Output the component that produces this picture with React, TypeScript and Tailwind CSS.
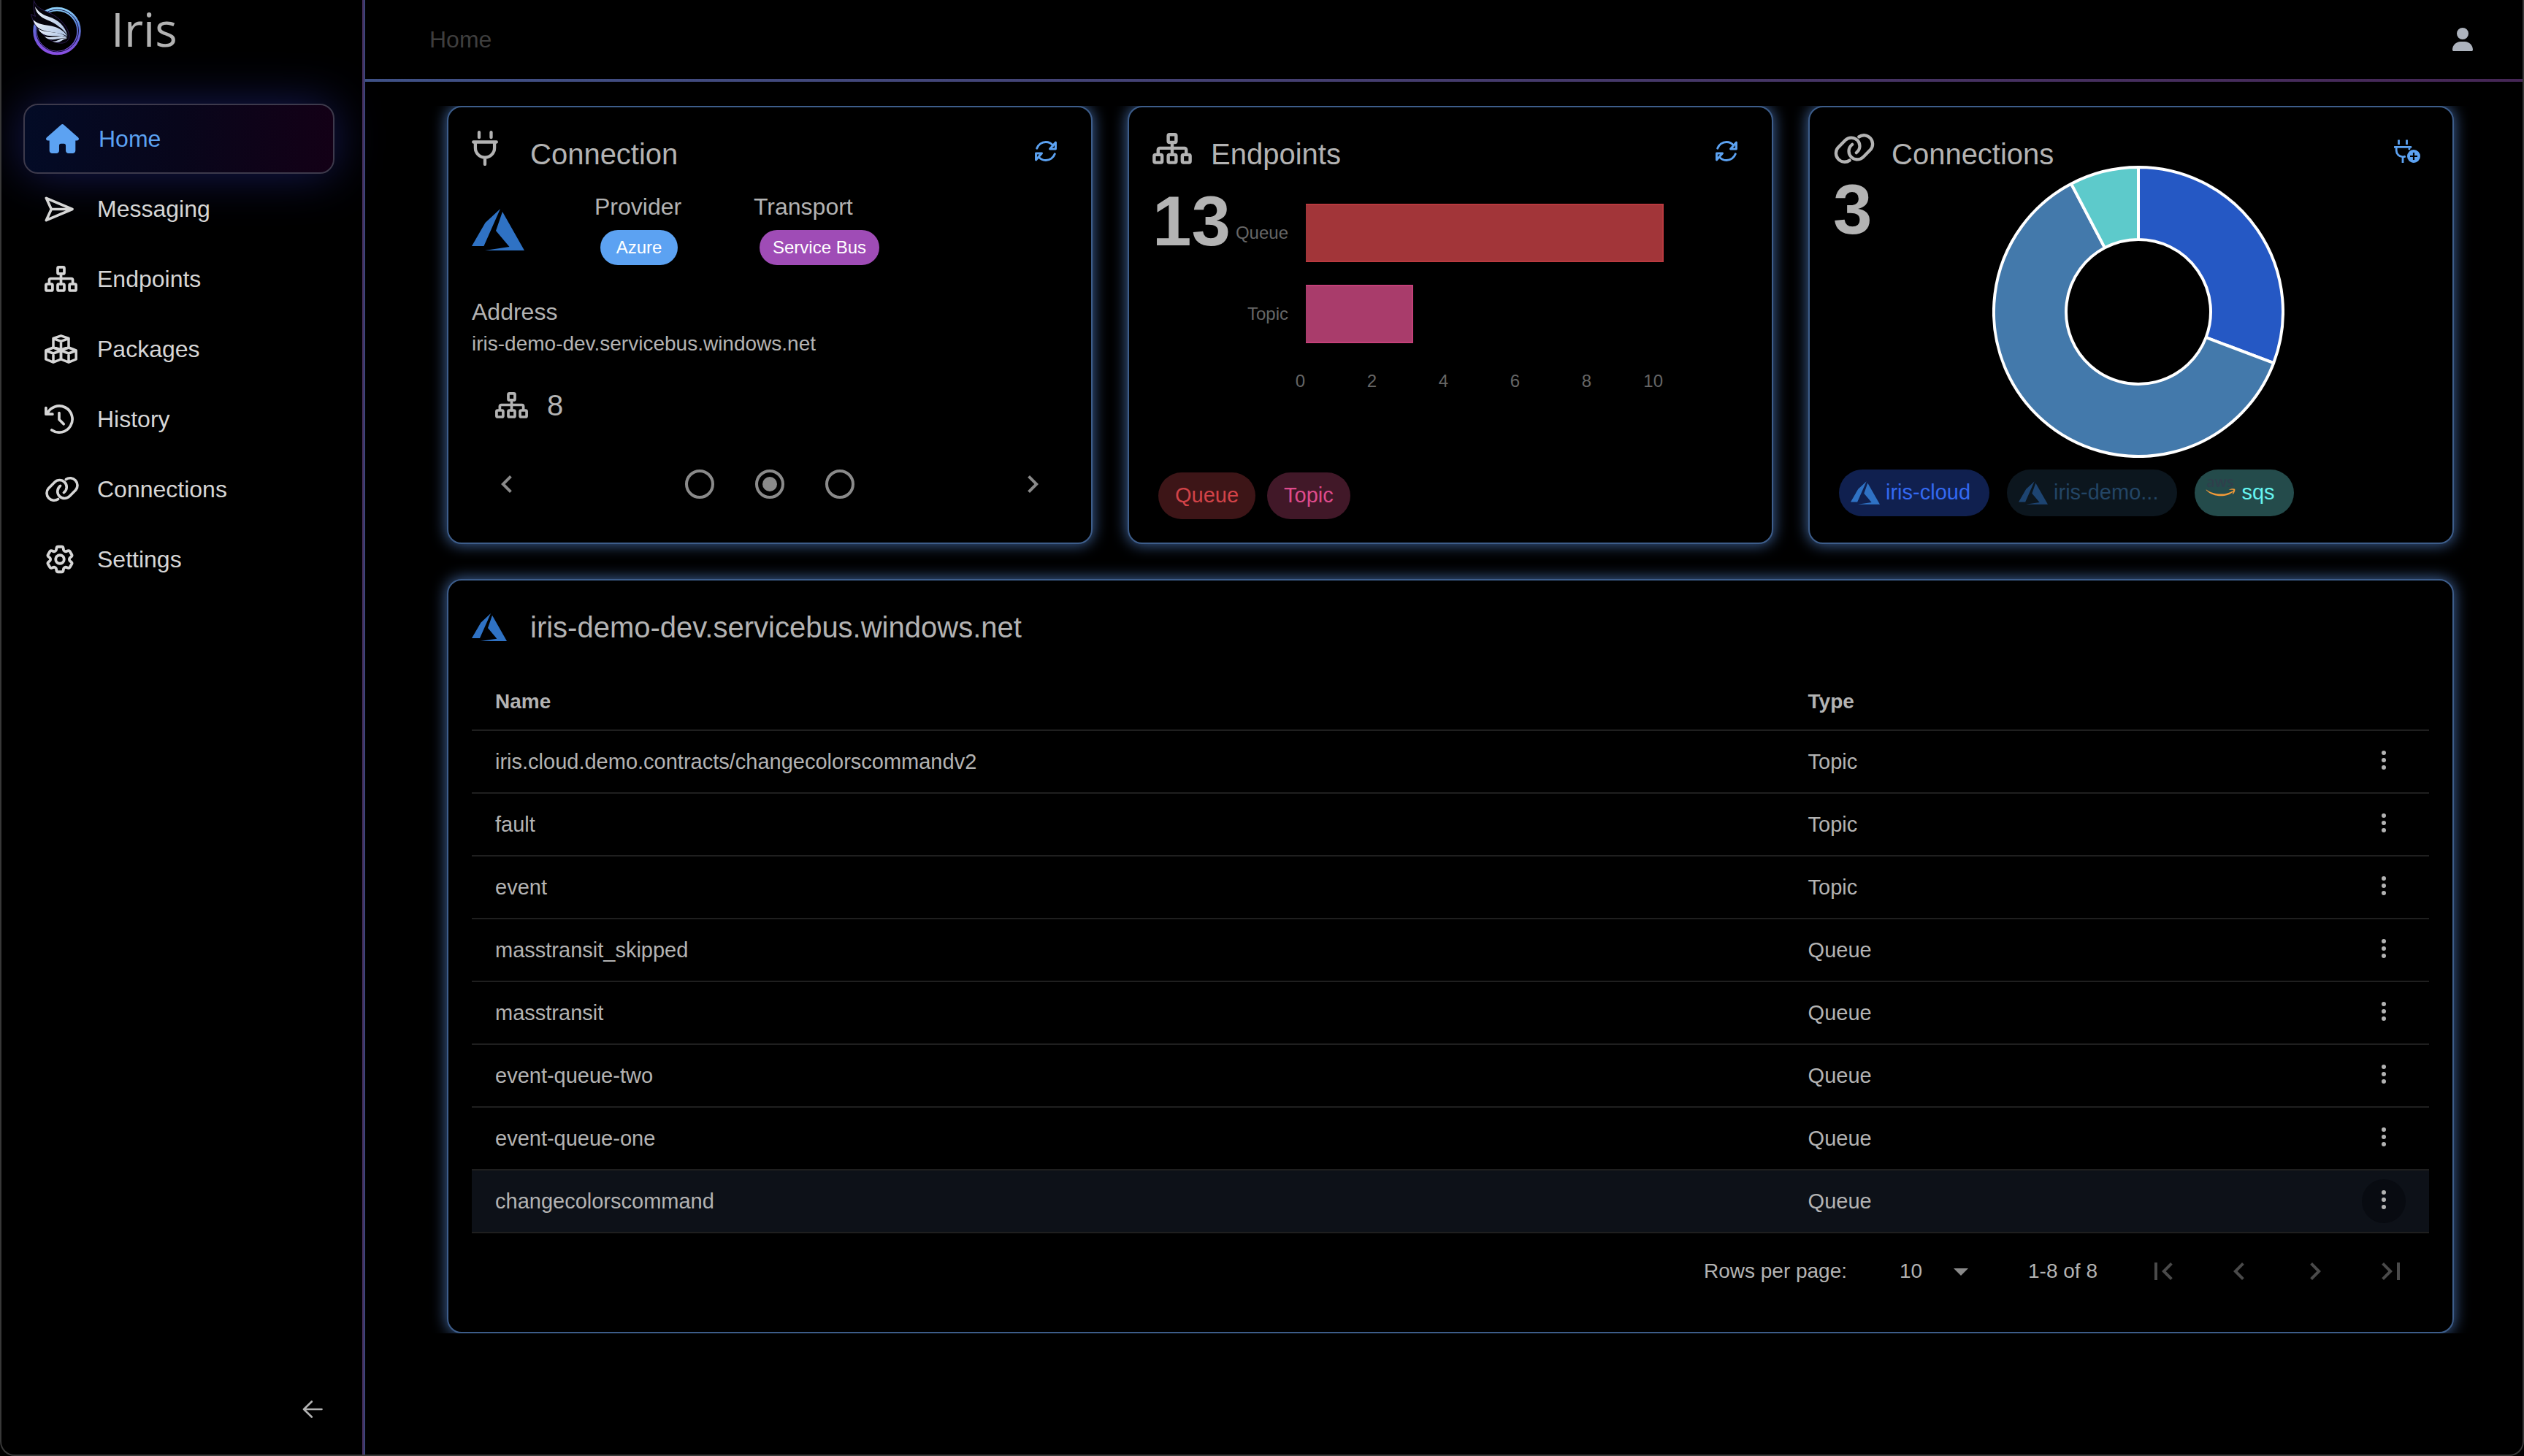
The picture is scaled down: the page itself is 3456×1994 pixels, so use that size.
import { useState } from 'react'
import type { ReactNode } from 'react'
import { FaUser } from 'react-icons/fa6'
import { HiOutlineCog6Tooth } from 'react-icons/hi2'
import {
  MdArrowDropDown,
  MdChevronLeft,
  MdChevronRight,
  MdFirstPage,
  MdLastPage,
} from 'react-icons/md'

const ENDPOINTS = [
  { name: 'iris.cloud.demo.contracts/changecolorscommandv2', type: 'Topic' },
  { name: 'fault', type: 'Topic' },
  { name: 'event', type: 'Topic' },
  { name: 'masstransit_skipped', type: 'Queue' },
  { name: 'masstransit', type: 'Queue' },
  { name: 'event-queue-two', type: 'Queue' },
  { name: 'event-queue-one', type: 'Queue' },
  { name: 'changecolorscommand', type: 'Queue' },
]

const BARS = [
  { label: 'Queue', value: 10, fill: '#a23539', stroke: '#b93a3f' },
  { label: 'Topic', value: 3, fill: '#a93c6b', stroke: '#c44079' },
]

const TICKS = [0, 2, 4, 6, 8, 10]

const SLICES = [
  { value: 4, fill: '#2558c4' },
  { value: 8, fill: '#4379ab' },
  { value: 1, fill: '#5dcacb' },
]

function IrisLogo() {
  return (
    <svg viewBox="42 0 70 76" className="h-[76px] w-[70px]" aria-hidden="true">
      <defs>
        <linearGradient id="ring" x1="0.6" y1="0" x2="0.5" y2="1">
          <stop offset="0" stopColor="#8fd2fb" />
          <stop offset="0.3" stopColor="#5a86dc" />
          <stop offset="0.65" stopColor="#6a5bd6" />
          <stop offset="1" stopColor="#8a50e4" />
        </linearGradient>
        <linearGradient id="feather" x1="0" y1="0" x2="1" y2="1">
          <stop offset="0" stopColor="#eef4fb" />
          <stop offset="1" stopColor="#a9bfe2" />
        </linearGradient>
      </defs>
      <circle cx="78" cy="42.5" r="30" fill="none" stroke="url(#ring)" strokeWidth="5.5" />
      <circle cx="78.5" cy="42" r="29" fill="none" stroke="#15103a" strokeWidth="1" />
      <path
        d="M46.500 0.500C48 7 54 12 64 16c13 5 28 16 31 33 0 6-4 9-9 10-9 1-20-4-27-12C50 39 45 30 42.500 19.500l6 3C46 16 45.500 8 46.500 0.500z"
        fill="#05030c"
        stroke="#2a1a4d"
        strokeWidth="1"
      />
      <g fill="url(#feather)">
        <path d="M48 9c1 9 8 15 17 18.500C76 32 86 39 92.500 48.500 89 36 80 27 67 23 57 20 51.500 15 48 9z" />
        <path d="M45.500 27c2 9 9 14 19 16 12 2 21 2.500 28 7C87 41 78 36.500 67 35c-9-1.300-17-3-21.500-8z" />
        <path d="M52.500 39.500c3 7 10 9.500 19 9.800 9 .3 15 .4 20.500 2-6-5-12-6-20-7-8-1-14.500-1.500-19.500-4.800z" />
        <path d="M61 50c4 4.500 11 5 17 3.500 5-1.200 9-1.800 14-1.500-6-2.700-12-2.200-17-1.400-5 .7-10 .7-14-.6z" />
        <path d="M72 56.500c4 2.200 9 1.500 12-.6 3-1.700 5-2.600 8-3.400-5-.5-8 .5-11 2-3 1.500-6 2.300-9 2z" />
      </g>
    </svg>
  )
}

function HouseIcon() {
  return (
    <svg viewBox="0 0 576 512" fill="currentColor" className="h-[40px] w-[45px]" aria-hidden="true">
      <path d="M288 0c8 0 16 3 22 8l254 224c8 7 12 15 12 24 0 18-14 32-32 32h-28v176c0 26-22 48-48 48h-74c-26 0-48-22-48-48v-91c0-18-12-32-30-32h-56c-18 0-30 14-30 32v91c0 26-22 48-48 48h-74c-26 0-48-22-48-48V288H32c-18 0-32-14-32-32 0-9 4-17 12-24L266 8c6-5 14-8 22-8z" />
    </svg>
  )
}

function SendIcon() {
  return (
    <svg viewBox="0 0 40 35" fill="none" stroke="currentColor" strokeWidth="3.600" strokeLinejoin="round" strokeLinecap="round" className="h-[35px] w-[40px]" aria-hidden="true">
      <path d="M2.300 2.300 38 17.500 2.300 32.700l7-15.200zM9.300 17.500H37" />
    </svg>
  )
}

function SitemapIcon({ className }: { className: string }) {
  return (
    <svg viewBox="0 0 45 36" fill="none" stroke="currentColor" strokeWidth="3.700" strokeLinecap="round" strokeLinejoin="round" className={className} aria-hidden="true">
      <rect x="18" y="1.900" width="9" height="9" rx="1.500" />
      <rect x="1.900" y="25" width="9" height="9" rx="1.500" />
      <rect x="18" y="25" width="9" height="9" rx="1.500" />
      <rect x="34.100" y="25" width="9" height="9" rx="1.500" />
      <path d="M22.500 11v14M6.400 24v-4.500a2 2 0 0 1 2-2h28.200a2 2 0 0 1 2 2V24" />
    </svg>
  )
}

function CubesIcon() {
  return (
    <svg viewBox="0 0 45 40" fill="none" stroke="currentColor" strokeWidth="3.500" strokeLinejoin="round" strokeLinecap="round" className="h-[40px] w-[45px]" aria-hidden="true">
      <path d="M22.500 1.800 33 5.300v12L22.500 21 12 17.300v-12zM12.500 5.800l10 3.500 10-3.500M22.500 9.500V21" />
      <path d="M12 18 1.800 22v12L12 38.200 22.500 34V22zM2.300 22.300 12 26l10-3.700M12 26v12" />
      <path d="M33 18l10.200 4v12L33 38.200 22.500 34V22zM42.700 22.300 33 26l-10-3.700M33 26v12" />
    </svg>
  )
}

function HistoryIcon() {
  return (
    <svg viewBox="0 0 40 40" fill="none" stroke="currentColor" strokeWidth="3.700" strokeLinecap="round" strokeLinejoin="round" className="size-[40px]" aria-hidden="true">
      <path d="M1.900 4.500v8.700h9M3.500 12.500A18.100 18.100 0 1 1 9.800 35" />
      <path d="M20 11.500v9l6.200 6.200" />
    </svg>
  )
}

function LinkIcon({ className }: { className: string }) {
  const loop = 'M29.300 4.500A10 10 0 0 1 42.700 19.100L34.300 27.600A9.800 9.800 0 0 1 20.500 27.600C17 24 16.300 17.500 21.600 13.300'
  return (
    <svg viewBox="0 0 48 36" fill="none" stroke="currentColor" strokeWidth="3.600" strokeLinecap="round" className={className} aria-hidden="true">
      <path d={loop} />
      <path d={loop} transform="rotate(180 24 18)" />
    </svg>
  )
}

function PlugIcon() {
  return (
    <svg viewBox="0 0 36 48" fill="none" stroke="currentColor" strokeWidth="4.300" strokeLinecap="round" className="h-[48px] w-[36px]" aria-hidden="true">
      <path d="M10 2.200v7M26.500 2.200v7M2.200 15.500h31.600M4.900 16v7.500a13.100 13.100 0 0 0 26.200 0V16M18 37v9" />
    </svg>
  )
}

function PlugPlusIcon() {
  return (
    <svg viewBox="0 0 36 32" fill="none" stroke="currentColor" strokeWidth="2.800" className="h-[32px] w-[36px]" aria-hidden="true">
      <path d="M6.500 0.500V7M17.500 0.500V7M12 25v7" />
      <path d="M1 10.400h22" strokeLinecap="round" />
      <path d="M3.200 11v4c0 5 4 8.800 8.800 8.800 1.400 0 2.700-.3 3.800-.9M21.300 11.500c-.2 1-.5 1.800-.9 2.600" />
      <circle cx="27" cy="23" r="9" fill="currentColor" stroke="none" />
      <path d="M27 18v10M22 23h10" stroke="#000" strokeWidth="2.200" />
    </svg>
  )
}

function RefreshIcon() {
  const half = 'M2.700 10.200C4.500 5 9.500 1.500 15 1.500c4.200 0 7.700 1.900 10 5M28.500 2v9h-8z'
  return (
    <svg viewBox="0 0 30 28" fill="none" stroke="currentColor" strokeWidth="2.900" strokeLinecap="round" strokeLinejoin="round" className="h-[28px] w-[30px]" aria-hidden="true">
      <path d={half} />
      <path d={half} transform="rotate(180 15 14)" />
    </svg>
  )
}

function AzureIcon({ className }: { className: string }) {
  return (
    <svg viewBox="0 0 72 57" fill="#2f72c4" className={className} aria-hidden="true">
      <path d="M39 0 18.500 19 0 51h16.500zM42 4l-9 26 18.500 22-33.500 5h54z" />
    </svg>
  )
}

function AwsIcon() {
  return (
    <svg viewBox="0 0 40 34" className="h-[34px] w-[40px] overflow-visible" aria-hidden="true">
      <text x="19" y="17" textAnchor="middle" fill="#2f3f4c" className="font-['Open_Sans',sans-serif] text-[20px] leading-[20px] font-semibold">
        aws
      </text>
      <g fill="#f19a38">
        <path d="M0 20.500c10 7.500 26 8 36 2 1.200-.6 1.600.6.600 1.300C27 32 9 31 0 21.500c-.5-.6-.4-1.200 0-1z" />
        <path d="M31.500 20.500c2.500-1.700 6.500-1.500 7.500-.8 1 .8 0 5-2.500 7-.4.300-.8.100-.6-.4.700-1.500 1.500-4.500 1.200-5.200-.4-.600-3.500-.400-5.200-.1-.5 0-.8-.2-.4-.5z" />
      </g>
    </svg>
  )
}

function ArrowLeftIcon() {
  return (
    <svg viewBox="0 0 28 24" fill="none" stroke="currentColor" strokeWidth="2.600" strokeLinecap="round" strokeLinejoin="round" className="h-[24px] w-[28px]" aria-hidden="true">
      <path d="M12.800 1.500 2 12l10.800 10.500M2 12h24.500" />
    </svg>
  )
}

function DotsIcon() {
  return (
    <svg viewBox="0 0 16 32" fill="currentColor" className="h-[32px] w-[16px]" aria-hidden="true">
      <circle cx="8" cy="6" r="3" />
      <circle cx="8" cy="16" r="3" />
      <circle cx="8" cy="26" r="3" />
    </svg>
  )
}

const NAV: { label: string; icon: ReactNode }[] = [
  { label: 'Home', icon: <HouseIcon /> },
  { label: 'Messaging', icon: <SendIcon /> },
  { label: 'Endpoints', icon: <SitemapIcon className="h-[36px] w-[45px]" /> },
  { label: 'Packages', icon: <CubesIcon /> },
  { label: 'History', icon: <HistoryIcon /> },
  { label: 'Connections', icon: <LinkIcon className="h-[36px] w-[48px]" /> },
  { label: 'Settings', icon: <HiOutlineCog6Tooth strokeWidth={2} className="-mx-[2px] size-[46px]" /> },
]

function Sidebar() {
  return (
    <aside className="flex w-[494px] shrink-0 flex-col pr-[38px] pl-[30px]">
      <div className="flex h-[142px] items-start gap-[40px] pl-[10px]">
        <IrisLogo />
        <span className="font-['Open_Sans',sans-serif] text-[64px] leading-[80px] font-normal text-[#b3b3b3]">Iris</span>
      </div>
      <nav className="flex flex-col">
        {NAV.map((item, i) => (
          <a
            key={item.label}
            href="#"
            className={
              i === 0
                ? 'flex h-[96px] items-center rounded-[20px] border-2 border-[#3d3a4c] bg-linear-to-r from-[#030b26] via-[#08061b] to-[#130016] pl-[29px] text-[#5ca2f2] shadow-[0_0_64px_#161a56]'
                : 'relative flex h-[96px] items-center pl-[29px] text-[#d6d6d6]'
            }
          >
            <span className="flex w-[72px] shrink-0 items-center">{item.icon}</span>
            <span className="text-[32px] leading-[40px]">{item.label}</span>
          </a>
        ))}
      </nav>
      <button type="button" aria-label="Collapse menu" className="mt-auto mb-[32px] flex h-[60px] w-[60px] items-center justify-center self-end text-[#b3b3b3]">
        <ArrowLeftIcon />
      </button>
    </aside>
  )
}

function Card({ children }: { children: ReactNode }) {
  return (
    <section className="flex min-h-[600px] flex-col rounded-[20px] border-2 border-[#3d5d8a] bg-black p-[32px] shadow-[0_0_20px_1px_#3f639a]">
      {children}
    </section>
  )
}

function CardHeader({ icon, title, action, label }: { icon: ReactNode; title: string; action: ReactNode; label: string }) {
  return (
    <div className="flex h-[56px] items-start">
      <span className="flex h-[48px] w-[80px] items-center">{icon}</span>
      <h2 className="text-[40px] leading-[64px]">{title}</h2>
      <button type="button" aria-label={label} className="ml-auto flex h-[56px] w-[60px] items-center justify-center text-[#5ca2f2]">
        {action}
      </button>
    </div>
  )
}

function ConnectionCard() {
  const [page, setPage] = useState(1)
  return (
    <Card>
      <CardHeader icon={<PlugIcon />} title="Connection" action={<RefreshIcon />} label="Refresh connection" />
      <div className="grid grid-cols-[168px_218px_1fr] pt-[28px]">
        <AzureIcon className="mt-[23px] h-[57px] w-[72px]" />
        <div>
          <div className="text-[32px] leading-[40px]">Provider</div>
          <span className="mt-[12px] ml-[8px] inline-flex h-[48px] min-w-[106px] items-center justify-center rounded-full bg-[#5ca2f2] px-[18px] text-[24px] text-white">
            Azure
          </span>
        </div>
        <div>
          <div className="text-[32px] leading-[40px]">Transport</div>
          <span className="mt-[12px] ml-[8px] inline-flex h-[48px] items-center justify-center rounded-full bg-[#9f4cb6] px-[18px] text-[24px] text-white">
            Service Bus
          </span>
        </div>
      </div>
      <div className="mt-[44px] text-[32px] leading-[40px]">Address</div>
      <div className="mt-[4px] text-[28px] leading-[40px]">iris-demo-dev.servicebus.windows.net</div>
      <div className="mt-[44px] flex h-[40px] items-center gap-[26px] pl-[32px]">
        <SitemapIcon className="h-[36px] w-[45px]" />
        <span className="text-[40px] leading-[40px]">8</span>
      </div>
      <div className="mt-auto flex items-center justify-between text-[#8a8a8a]">
        <button type="button" aria-label="Previous" onClick={() => setPage(Math.max(0, page - 1))} className="flex size-[96px] items-center justify-center">
          <MdChevronLeft className="size-[48px]" />
        </button>
        <div className="flex">
          {[0, 1, 2].map((n) => (
            <label key={n} className="flex size-[96px] items-center justify-center">
              <input
                type="radio"
                name="connection"
                aria-label={`Connection ${n + 1}`}
                checked={page === n}
                onChange={() => setPage(n)}
                className="size-[40px] appearance-none rounded-full border-4 border-[#8a8a8a] bg-clip-content p-[6px] checked:bg-[#8a8a8a]"
              />
            </label>
          ))}
        </div>
        <button type="button" aria-label="Next" onClick={() => setPage(Math.min(2, page + 1))} className="flex size-[96px] items-center justify-center">
          <MdChevronRight className="size-[48px]" />
        </button>
      </div>
    </Card>
  )
}

function BarChart() {
  return (
    <svg viewBox="0 0 700 300" className="h-[300px] w-[700px] text-[24px]" role="img" aria-label="Endpoints by type">
      {BARS.map((bar, i) => (
        <g key={bar.label}>
          <text x={79} y={72 + i * 111} textAnchor="end" fill="#666">
            {bar.label}
          </text>
          <rect x={103} y={24 + i * 111} width={bar.value * 49} height={80} fill={bar.fill} />
          <path
            d={`M103 ${25 + i * 111}h${bar.value * 49 - 1}v78h-${bar.value * 49 - 1}`}
            fill="none"
            stroke={bar.stroke}
            strokeWidth={2}
          />
        </g>
      ))}
      {TICKS.map((tick) => (
        <text key={tick} x={102 + tick * 49} y={275} textAnchor="end" fill="#666">
          {tick}
        </text>
      ))}
    </svg>
  )
}

function EndpointsCard() {
  return (
    <Card>
      <CardHeader icon={<SitemapIcon className="h-[43px] w-[54px]" />} title="Endpoints" action={<RefreshIcon />} label="Refresh endpoints" />
      <div className="mt-[20px] flex items-start">
        <span className="text-[96px] leading-[96px] font-bold">13</span>
        <BarChart />
      </div>
      <div className="mt-auto flex gap-[16px] pl-[8px] text-[29px]">
        <span className="flex h-[64px] items-center rounded-full bg-[#3d1517] px-[23px] text-[#d24348]">Queue</span>
        <span className="flex h-[64px] items-center rounded-full bg-[#411828] px-[23px] text-[#de4b8c]">Topic</span>
      </div>
    </Card>
  )
}

function point(r: number, turn: number): string {
  const a = turn * Math.PI * 2
  return `${(200 + r * Math.sin(a)).toFixed(2)} ${(200 - r * Math.cos(a)).toFixed(2)}`
}

function DonutChart() {
  const total = SLICES.reduce((sum, s) => sum + s.value, 0)
  let start = 0
  return (
    <svg viewBox="0 0 400 400" className="size-[400px]" role="img" aria-label="Endpoints by connection">
      {SLICES.map((slice) => {
        const from = start / total
        start += slice.value
        const to = start / total
        const large = to - from > 0.5 ? 1 : 0
        const d = `M${point(198, from)}A198 198 0 ${large} 1 ${point(198, to)}L${point(99, to)}A99 99 0 ${large} 0 ${point(99, from)}Z`
        return <path key={slice.fill} d={d} fill={slice.fill} stroke="#fff" strokeWidth={4} strokeLinejoin="bevel" />
      })}
    </svg>
  )
}

function ConnectionsCard() {
  return (
    <Card>
      <CardHeader icon={<LinkIcon className="h-[43px] w-[58px]" />} title="Connections" action={<PlugPlusIcon />} label="Add connection" />
      <div className="mt-[4px] flex items-start">
        <span className="text-[96px] leading-[96px] font-bold">3</span>
        <div className="-mt-[12px] flex flex-1 justify-center pr-[34px]">
          <DonutChart />
        </div>
      </div>
      <div className="mt-auto mb-[4px] flex gap-[24px] pl-[8px] text-[29px]">
        <span className="flex h-[64px] items-center gap-[8px] rounded-full bg-[#10204f] pr-[26px] pl-[16px] text-[#3369f2]">
          <AzureIcon className="h-[32px] w-[40px]" />
          iris-cloud
        </span>
        <span className="flex h-[64px] items-center gap-[8px] rounded-full bg-[#0c161e] pr-[26px] pl-[16px] text-[#234565]">
          <AzureIcon className="h-[32px] w-[40px] opacity-50" />
          iris-demo...
        </span>
        <span className="flex h-[64px] items-center gap-[8px] rounded-full bg-[#244b4b] pr-[26px] pl-[16px] text-[#66f5f0]">
          <span className="mb-[16px]">
            <AwsIcon />
          </span>
          sqs
        </span>
      </div>
    </Card>
  )
}

function EndpointTable() {
  return (
    <table className="mt-[32px] w-full table-fixed border-separate border-spacing-0 text-left text-[29px] leading-[40px]">
      <thead>
        <tr className="text-[28px]">
          <th scope="col" className="h-[78px] w-[67%] border-b-2 border-[#1f1f1f] px-[32px] font-bold">Name</th>
          <th scope="col" className="h-[78px] border-b-2 border-[#1f1f1f] px-[34px] font-bold">Type</th>
          <th scope="col" aria-label="Actions" className="h-[78px] w-[124px] border-b-2 border-[#1f1f1f]" />
        </tr>
      </thead>
      <tbody className="[&>tr:last-child]:bg-[#0d1118]">
        {ENDPOINTS.map((row, i) => (
          <tr key={row.name}>
            <td className="h-[86px] border-b-2 border-[#1f1f1f] px-[32px]">{row.name}</td>
            <td className="h-[86px] border-b-2 border-[#1f1f1f] px-[34px]">{row.type}</td>
            <td className="h-[86px] border-b-2 border-[#1f1f1f] px-[32px]">
              <button
                type="button"
                aria-label={`Actions for ${row.name}`}
                className={
                  i === ENDPOINTS.length - 1
                    ? 'flex size-[60px] items-center justify-center rounded-full bg-[#080b11] pb-[4px]'
                    : 'flex size-[60px] items-center justify-center pb-[4px]'
                }
              >
                <DotsIcon />
              </button>
            </td>
          </tr>
        ))}
      </tbody>
    </table>
  )
}

function Pagination() {
  const buttons = [
    { label: 'First page', icon: <MdFirstPage /> },
    { label: 'Previous page', icon: <MdChevronLeft /> },
    { label: 'Next page', icon: <MdChevronRight /> },
    { label: 'Last page', icon: <MdLastPage /> },
  ]
  return (
    <div className="flex h-[103px] items-center justify-end text-[28px] leading-[40px]">
      <label htmlFor="rows">Rows per page:</label>
      <div className="relative ml-[72px] flex items-center">
        <select id="rows" defaultValue="10" className="w-[108px] appearance-none bg-black">
          <option>10</option>
          <option>25</option>
          <option>50</option>
        </select>
        <MdArrowDropDown className="pointer-events-none absolute right-0 size-[48px] text-[#8a8a8a]" />
      </div>
      <span className="mr-[38px] ml-[68px]">1-8 of 8</span>
      {buttons.map((b) => (
        <button key={b.label} type="button" aria-label={b.label} disabled className="flex w-[104px] justify-center text-[48px] text-[#4a4a4a]">
          {b.icon}
        </button>
      ))}
    </div>
  )
}

export default function App() {
  return (
    <div className="bg-black">
      <div className="flex min-h-screen overflow-hidden rounded-b-[20px] border-x-2 border-b-2 border-[#383838] bg-black font-['Liberation_Sans',Arial,sans-serif] text-[#b3b3b3]">
        <Sidebar />
        <div className="w-[4px] shrink-0 bg-linear-to-r from-[#46305f] from-50% to-[#3c4479] to-50%" />
        <div className="flex min-w-0 flex-1 flex-col">
          <header className="flex h-[108px] items-center justify-between pr-[68px] pl-[88px]">
            <span className="text-[32px] leading-[40px] text-[#3e3e3e]">Home</span>
            <button type="button" aria-label="Account" className="text-[#adb3bd]">
              <FaUser className="h-[32px] w-[28px]" />
            </button>
          </header>
          <div className="h-[4px] bg-linear-to-r from-[#3f5186] to-[#452655]" />
          {/* the glow of the cards stops at the top and bottom edge of the scroll area */}
          <main className="mt-[33px] flex flex-col gap-[48px] overflow-y-clip pr-[94px] pl-[112px]">
            <div className="grid grid-cols-3 gap-[48px]">
              <ConnectionCard />
              <EndpointsCard />
              <ConnectionsCard />
            </div>
            <Card>
              <div className="flex h-[64px] items-center">
                <span className="w-[80px]">
                  <AzureIcon className="h-[38px] w-[48px]" />
                </span>
                <h2 className="text-[40px] leading-[64px]">iris-demo-dev.servicebus.windows.net</h2>
              </div>
              <EndpointTable />
              <Pagination />
            </Card>
          </main>
        </div>
      </div>
    </div>
  )
}
